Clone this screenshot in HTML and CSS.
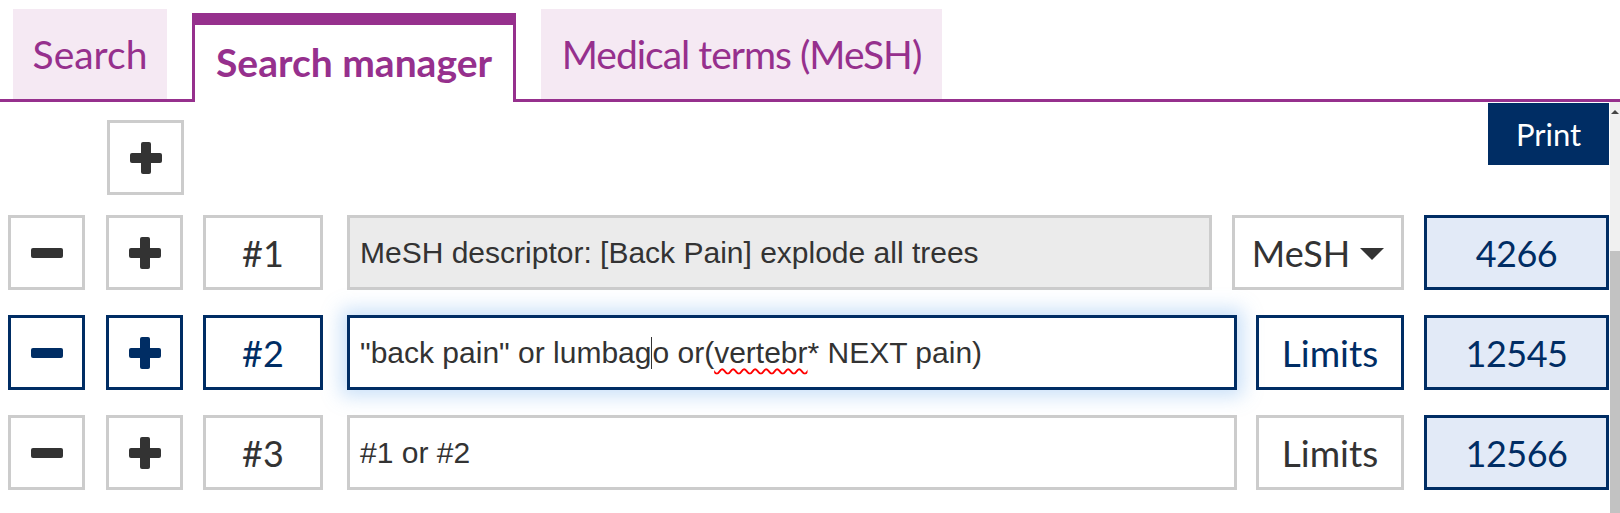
FILE: index.html
```html
<!DOCTYPE html>
<html lang="en">
<head>
  <meta charset="UTF-8">
  <title>Search manager</title>
  <link rel="stylesheet" href="styles.css">
</head>
<body>
  <div class="tabs">
    <div class="tab tab-search">Search</div>
    <div class="tab tab-active">Search manager</div>
    <div class="tab tab-mesh">Medical terms (MeSH)</div>
  </div>

  <div class="content">
    <div class="main">
      <div class="toolbar">
        <button class="sq add-top">
          <svg width="32" height="32" viewBox="0 0 32 32"><rect x="0" y="11" width="32" height="10" rx="2"/><rect x="11" y="0" width="10" height="32" rx="2"/></svg>
        </button>
        <button class="print">Print</button>
      </div>

      <div class="rows">
        <div class="row">
          <button class="sq"><svg width="32" height="10" viewBox="0 0 32 10"><rect width="32" height="10" rx="2"/></svg></button>
          <button class="sq plus"><svg width="32" height="32" viewBox="0 0 32 32"><rect x="0" y="11" width="32" height="10" rx="2"/><rect x="11" y="0" width="10" height="32" rx="2"/></svg></button>
          <div class="num">#1</div>
          <div class="query disabled">MeSH descriptor: [Back Pain] explode all trees</div>
          <div class="select">MeSH <span class="caret"></span></div>
          <div class="count">4266</div>
        </div>

        <div class="row current">
          <button class="sq"><svg width="32" height="10" viewBox="0 0 32 10"><rect width="32" height="10" rx="2"/></svg></button>
          <button class="sq plus"><svg width="32" height="32" viewBox="0 0 32 32"><rect x="0" y="11" width="32" height="10" rx="2"/><rect x="11" y="0" width="10" height="32" rx="2"/></svg></button>
          <div class="num">#2</div>
          <div class="query focused">"back pain" or lumbag<span class="cursor"></span>o or(<span class="typo">vertebr</span>* NEXT pain)</div>
          <div class="limits">Limits</div>
          <div class="count">12545</div>
        </div>

        <div class="row">
          <button class="sq"><svg width="32" height="10" viewBox="0 0 32 10"><rect width="32" height="10" rx="2"/></svg></button>
          <button class="sq plus"><svg width="32" height="32" viewBox="0 0 32 32"><rect x="0" y="11" width="32" height="10" rx="2"/><rect x="11" y="0" width="10" height="32" rx="2"/></svg></button>
          <div class="num">#3</div>
          <div class="query">#1 or #2</div>
          <div class="limits">Limits</div>
          <div class="count">12566</div>
        </div>
      </div>
    </div>

    <div class="scrollbar">
      <span class="arrow"></span>
      <div class="thumb"></div>
    </div>
  </div>
</body>
</html>
```

FILE: styles.css
```css
body {
  margin: 0;
  font-family: Lato, "Noto Sans", sans-serif;
  background: #fff;
  color: #333;
  overflow: hidden;
}
.tabs {
  display: flex;
  align-items: flex-end;
  gap: 25px;
  height: 99px;
  padding-left: 13px;
  border-bottom: 3px solid #96308d;
}
.tab {
  height: 90px;
  display: flex;
  align-items: center;
  justify-content: center;
  box-sizing: border-box;
  background: #f5e9f3;
  color: #96308d;
  font-size: 39px;
  white-space: nowrap;
}
.tab-search {
  width: 154px;
}
.tab-active {
  width: 324px;
  height: 89px;
  margin-bottom: -3px;
  padding-bottom: 4px;
  background: #fff;
  border: 3px solid #96308d;
  border-top-width: 12px;
  border-bottom: none;
  font-weight: bold;
}
.tab-mesh {
  width: 401px;
  letter-spacing: -1px;
}

.content {
  display: flex;
  height: 412px;
}
.main {
  flex: 1;
  padding: 0 1px 0 8px;
}
.toolbar {
  display: flex;
  align-items: flex-start;
}
.print {
  margin-left: auto;
  margin-top: 1px;
  width: 121px;
  height: 62px;
  border: none;
  background: #002d64;
  color: #fff;
  font-family: Lato, "Noto Sans", sans-serif;
  font-size: 31px;
}

.sq {
  width: 77px;
  height: 75px;
  padding: 0;
  display: flex;
  align-items: center;
  justify-content: center;
  background: #fff;
  border: 3px solid #ccc;
  fill: #333;
}
.add-top {
  margin-left: 99px;
  margin-top: 18px;
}
.plus {
  margin-left: 21px;
}

.rows {
  display: flex;
  flex-direction: column;
  gap: 25px;
  margin-top: 20px;
}
.row {
  display: flex;
  height: 75px;
}
.row > div {
  box-sizing: border-box;
  border: 3px solid #ccc;
  display: flex;
  align-items: center;
}
.num {
  width: 120px;
  margin-left: 20px;
  justify-content: center;
  font-size: 36px;
}
.query {
  flex: 1;
  margin-left: 24px;
  padding-left: 10px;
  font-family: "Liberation Sans", Arial, sans-serif;
  font-size: 30px;
  white-space: pre;
}
.query.disabled {
  background: #ebebeb;
}
.select {
  width: 172px;
  margin-left: 20px;
  justify-content: center;
  gap: 10px;
  font-size: 36px;
}
.caret {
  width: 0;
  height: 0;
  border-left: 12px solid transparent;
  border-right: 12px solid transparent;
  border-top: 12px solid #333;
  margin-top: 2px;
}
.limits {
  width: 148px;
  margin-left: 19px;
  justify-content: center;
  font-size: 37px;
}
.row > .count {
  width: 185px;
  margin-left: 20px;
  justify-content: center;
  background: #e2eaf7;
  border-color: #002d64;
  color: #002d64;
  font-size: 36px;
  letter-spacing: -0.5px;
}

.current .sq,
.current > div {
  border-color: #002d64;
  fill: #002d64;
}
.current .num,
.current .limits {
  color: #002d64;
}
.query.focused {
  box-shadow: 0 0 18px 6px rgba(100, 165, 235, 0.35);
}
.cursor {
  display: inline-block;
  width: 1px;
  height: 32px;
  background: #333;
  vertical-align: -7px;
}
.typo {
  text-decoration: underline wavy #f00;
  text-decoration-thickness: 1.5px;
  text-underline-offset: 5px;
}

.scrollbar {
  width: 10px;
  background: #f0f0f0;
  display: flex;
  flex-direction: column;
  align-items: center;
}
.arrow {
  margin-top: 8px;
  width: 0;
  height: 0;
  border-left: 4px solid transparent;
  border-right: 4px solid transparent;
  border-bottom: 4px solid #444;
}
.thumb {
  margin-top: auto;
  width: 100%;
  height: 263px;
  background: #c2c2c2;
}
```
